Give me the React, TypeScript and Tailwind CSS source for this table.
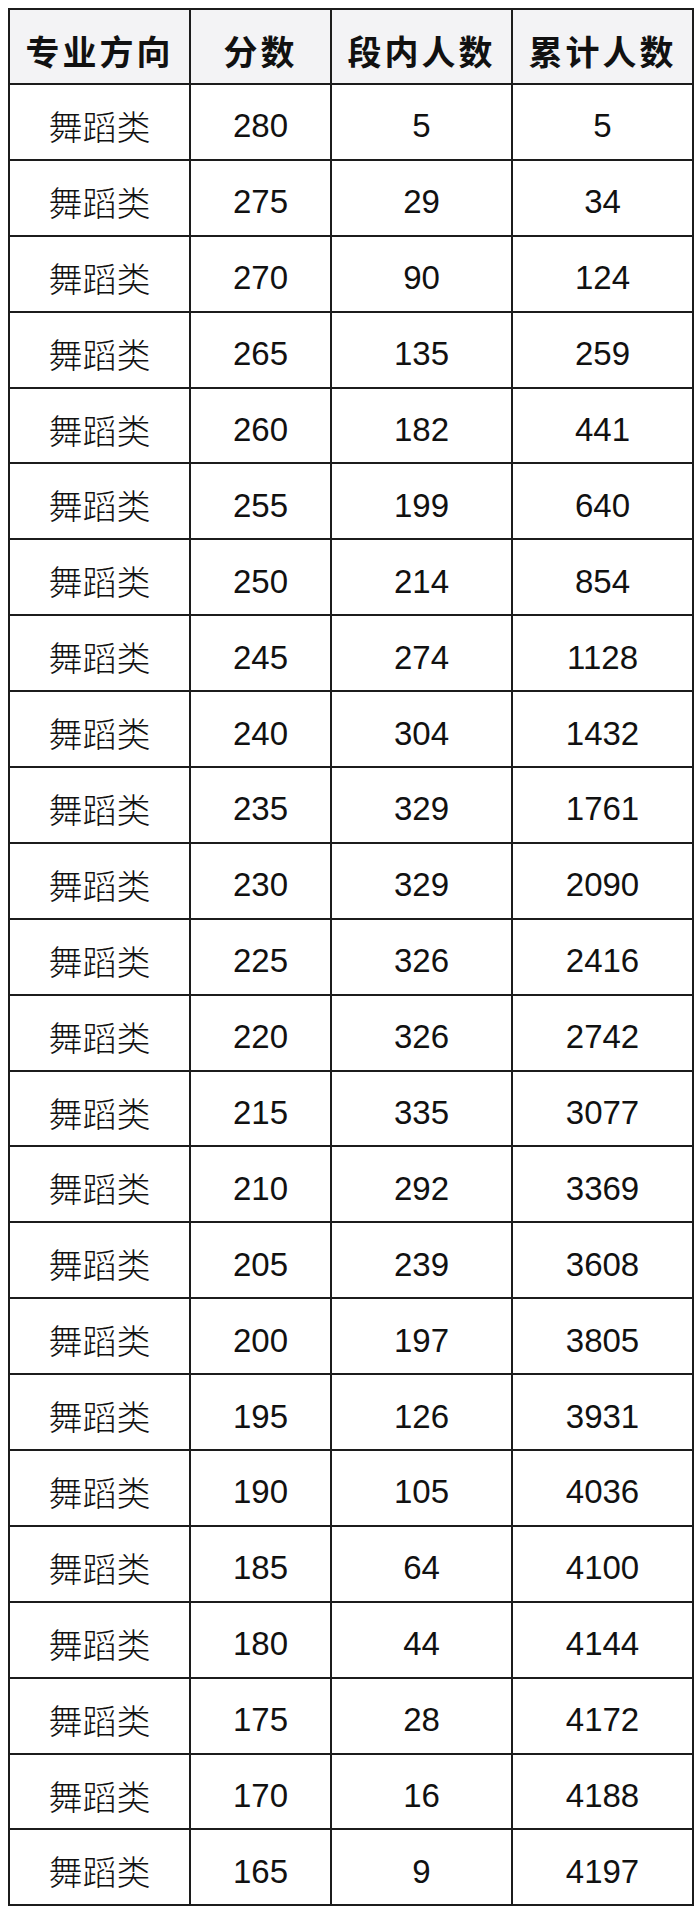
const ROWS: [number, number, number][] = [
  [280, 5, 5],
  [275, 29, 34],
  [270, 90, 124],
  [265, 135, 259],
  [260, 182, 441],
  [255, 199, 640],
  [250, 214, 854],
  [245, 274, 1128],
  [240, 304, 1432],
  [235, 329, 1761],
  [230, 329, 2090],
  [225, 326, 2416],
  [220, 326, 2742],
  [215, 335, 3077],
  [210, 292, 3369],
  [205, 239, 3608],
  [200, 197, 3805],
  [195, 126, 3931],
  [190, 105, 4036],
  [185, 64, 4100],
  [180, 44, 4144],
  [175, 28, 4172],
  [170, 16, 4188],
  [165, 9, 4197],
]

const HEADERS = ['专业方向', '分数', '段内人数', '累计人数']

const cjk = "font-['Noto_Sans_CJK_SC',sans-serif]"
const num = "font-['Liberation_Sans',Arial,sans-serif]"

export default function App() {
  return (
    <div className="w-[700px] h-[1914px] bg-white pt-2 pl-2">
      <table className="border-collapse table-fixed w-[684px] text-[#111]">
        <colgroup>
          <col className="w-[181px]" />
          <col className="w-[141px]" />
          <col className="w-[181px]" />
          <col className="w-[181px]" />
        </colgroup>
        <thead>
          <tr className="h-[75px] bg-[#f3f3f5]">
            {HEADERS.map((h) => (
              <th
                key={h}
                className={`border-2 border-[#1c1c1c] text-center align-middle pt-2 font-bold text-[34px] tracking-[3px] leading-none ${cjk}`}
              >
                {h}
              </th>
            ))}
          </tr>
        </thead>
        <tbody>
          {ROWS.map(([score, inBand, total]) => (
            <tr key={score} className="h-[75.9px]">
              <td className={`border-2 border-[#1c1c1c] text-center align-middle pt-2 text-[34px] font-light leading-none ${cjk}`}>
                舞蹈类
              </td>
              <td className={`border-2 border-[#1c1c1c] text-center align-middle pt-2 text-[33px] leading-none ${num}`}>
                {score}
              </td>
              <td className={`border-2 border-[#1c1c1c] text-center align-middle pt-2 text-[33px] leading-none ${num}`}>
                {inBand}
              </td>
              <td className={`border-2 border-[#1c1c1c] text-center align-middle pt-2 text-[33px] leading-none ${num}`}>
                {total}
              </td>
            </tr>
          ))}
        </tbody>
      </table>
    </div>
  )
}
